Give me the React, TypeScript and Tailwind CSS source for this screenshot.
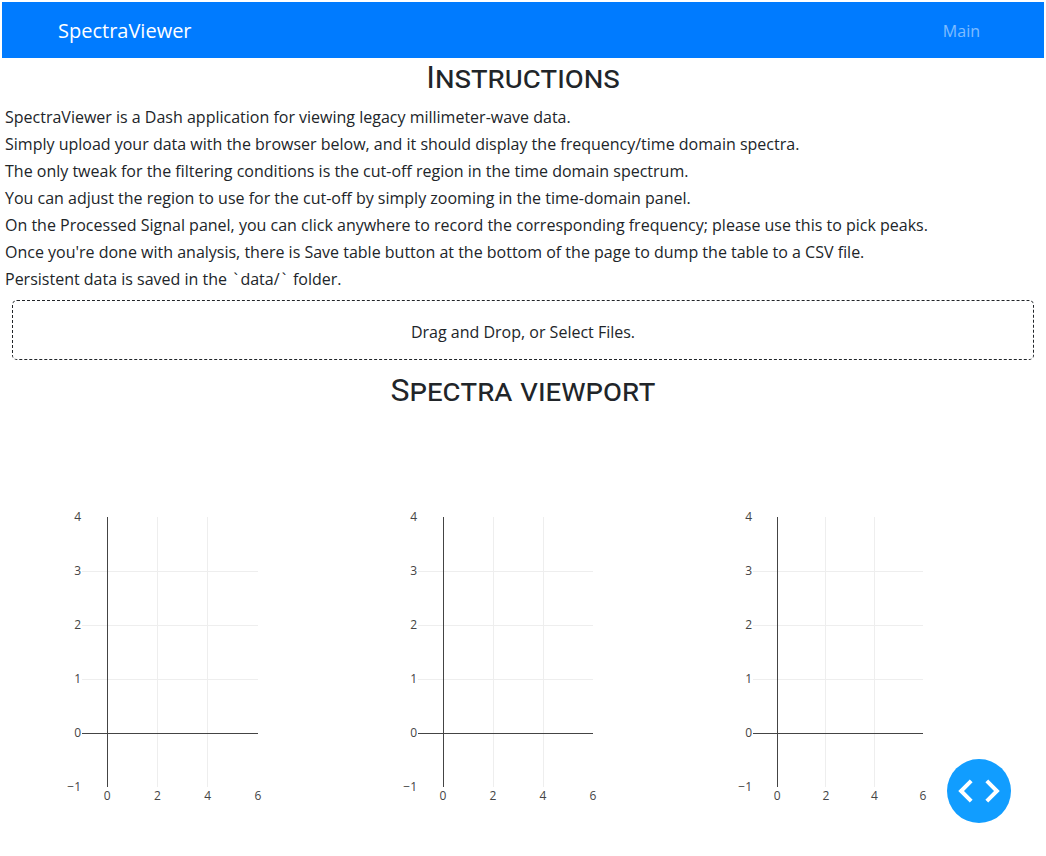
const INSTRUCTIONS = [
  "SpectraViewer is a Dash application for viewing legacy millimeter-wave data.",
  "Simply upload your data with the browser below, and it should display the frequency/time domain spectra.",
  "The only tweak for the filtering conditions is the cut-off region in the time domain spectrum.",
  "You can adjust the region to use for the cut-off by simply zooming in the time-domain panel.",
  "On the Processed Signal panel, you can click anywhere to record the corresponding frequency; please use this to pick peaks.",
  "Once you're done with analysis, there is Save table button at the bottom of the page to dump the table to a CSV file.",
];

type PlotProps = { width: number; right: number; xs: number[]; labels: number[] };

const PLOTS: PlotProps[] = [
  { width: 336, right: 256, xs: [105.5, 155.5, 205.5], labels: [105.1, 155.4, 205.7, 256] },
  { width: 335, right: 255, xs: [105.5, 155.5, 205.5], labels: [105, 155, 205, 255] },
  { width: 330, right: 250, xs: [104.5, 152.5, 201.5], labels: [104.3, 152.9, 201.4, 250] },
];

function Plot({ width, right, xs, labels }: PlotProps) {
  return (
    <svg width={width} height={438} className="block shrink-0" fontSize="12" fill="#444">
      <g stroke="#eee" strokeWidth="1">
        {xs.slice(1).map((x) => (
          <path key={x} d={`M${x} 99V369`} />
        ))}
        {[153.5, 207.5, 261.5].map((y) => (
          <path key={y} d={`M80 ${y}H${right}`} />
        ))}
      </g>
      <path d={`M${xs[0]} 99V369M80 315.5H${right}`} stroke="#444" strokeWidth="1" />
      {[4, 3, 2, 1, 0, "−1"].map((label, i) => (
        <text key={label} x="79" y={103.2 + i * 54} textAnchor="end">
          {label}
        </text>
      ))}
      {labels.map((x, i) => (
        <text key={x} x={x} y="382" textAnchor="middle">
          {i * 2}
        </text>
      ))}
    </svg>
  );
}

function Heading({ children }: { children: string }) {
  return (
    <h2 className="text-center font-['Roboto',sans-serif] text-[32px] leading-[38px] font-normal [font-variant:small-caps]">
      {children}
    </h2>
  );
}

function Backtick() {
  return <span className="pr-[2.5px] pl-[2.3px]">`</span>;
}

export default function App() {
  return (
    <div className="h-[856px] overflow-hidden bg-white px-0.5 pt-0.5 font-['Open_Sans',sans-serif] text-base text-[#212529]">
      <nav className="flex h-14 items-center justify-between bg-[#007bff] pt-0.5 pr-16 pl-14">
        <a className="text-xl leading-[30px] text-white">SpectraViewer</a>
        <a className="text-white/50">Main</a>
      </nav>
      <Heading>Instructions</Heading>
      <div className="mt-2 px-[3px] leading-[27px] whitespace-nowrap">
        {INSTRUCTIONS.map((line) => (
          <p key={line}>{line}</p>
        ))}
        <p>
          Persistent data is saved in the <Backtick />
          data/
          <Backtick /> folder.
        </p>
      </div>
      <div className="mx-2.5 mt-[7px] h-[60px] rounded-[5px] border border-dashed border-[#212529] pt-px text-center leading-[60px]">
        Drag and Drop, or Select Files.
      </div>
      <div className="mt-[11px]">
        <Heading>Spectra viewport</Heading>
      </div>
      <div className="mt-[9px] flex">
        {PLOTS.map((plot) => (
          <Plot key={plot.width} {...plot} />
        ))}
      </div>
      <button
        aria-label="Debug menu"
        className="fixed right-[35px] bottom-[33px] flex size-16 items-center justify-center rounded-full bg-[#119dff]"
      >
        <svg width="42" height="24" viewBox="0 0 42 24" fill="none" stroke="#fff" strokeWidth="4">
          <path d="M13.2 1.9L3.1 12L13.2 22.1M28.8 1.9L38.9 12L28.8 22.1" />
        </svg>
      </button>
    </div>
  );
}
